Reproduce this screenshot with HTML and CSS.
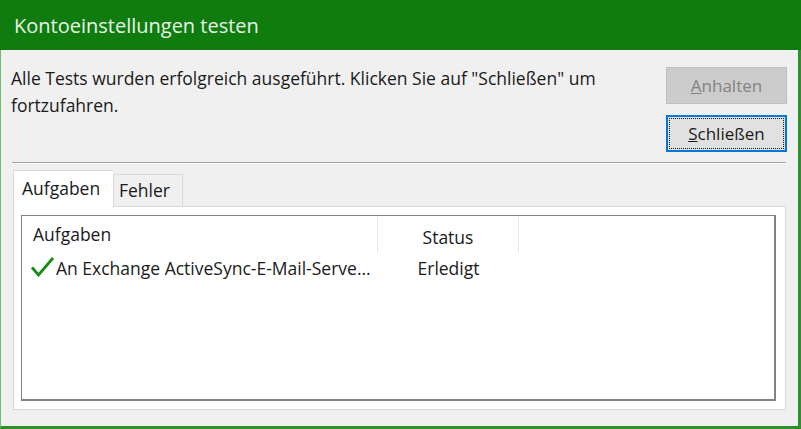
FILE: index.html
```html
<!DOCTYPE html>
<html lang="de">

<head>
    <meta charset="UTF-8">
    <meta name="viewport" content="width=device-width, initial-scale=1.0">
    <title>Kontoeinstellungen testen</title>
    <link rel="stylesheet" href="styles.css">
</head>

<body>

    <div class="window">
        <div class="titlebar">Kontoeinstellungen testen</div>

        <div class="content">
            <div class="top">
                <p class="message">Alle Tests wurden erfolgreich ausgeführt. Klicken Sie auf "Schließen" um fortzufahren.</p>
                <div class="buttons">
                    <button class="btn" disabled><u>A</u>nhalten</button>
                    <button class="btn default"><span class="focus"><u>S</u>chließen</span></button>
                </div>
            </div>

            <div class="separator"></div>

            <div class="tabs">
                <div class="tab active">Aufgaben</div>
                <div class="tab">Fehler</div>
            </div>

            <div class="panel">
                <div class="list">
                    <div class="list-head">
                        <div class="col col-task">Aufgaben</div>
                        <div class="col col-status">Status</div>
                    </div>
                    <div class="list-row">
                        <div class="col col-task">
                            <svg class="check" width="23" height="20" viewBox="0 0 23 20">
                                <path d="M1 10.5 L7.5 18 L22 1" fill="none" stroke="#178a17" stroke-width="2.8" />
                            </svg>
                            An Exchange ActiveSync-E-Mail-Serve...
                        </div>
                        <div class="col col-status">Erledigt</div>
                    </div>
                </div>
            </div>
        </div>
    </div>

</body>

</html>
```

FILE: styles.css
```css
body {
    margin: 0;
    font-family: 'Open Sans', 'Noto Sans', sans-serif;
    font-size: 17.5px;
    color: #1a1a1a;
    background-color: #f0f0f0;
}

.window {
    width: 801px;
    height: 429px;
    box-sizing: border-box;
    border-left: 1px solid #6cc06c;
    border-right: 3px solid #2f8f2f;
    border-bottom: 3px solid #2f8f2f;
    background-color: #f0f0f0;
    display: flex;
    flex-direction: column;
}

.titlebar {
    height: 50px;
    margin: 0 -3px 0 -1px;
    padding-left: 14px;
    background-color: #107c10;
    color: #e6f4e6;
    font-size: 20px;
    line-height: 51px;
}

.content {
    flex: 1;
    padding: 17px 11px 0 10px;
}

.top {
    display: flex;
    justify-content: space-between;
}

.message {
    margin: -2px 0 0 0;
    width: 620px;
    line-height: 27px;
}

.buttons {
    display: flex;
    flex-direction: column;
    gap: 11px;
}

.btn {
    width: 121px;
    height: 37px;
    font-family: inherit;
    font-size: 17px;
    color: #1a1a1a;
    background-color: #e1e1e1;
    border: 1px solid #adadad;
    padding: 0;
}

.btn[disabled] {
    background-color: #cccccc;
    border-color: #bfbfbf;
    color: #838383;
}

.btn.default {
    border: 2px solid #0078d7;
    padding: 1px;
}

.focus {
    display: flex;
    align-items: center;
    justify-content: center;
    height: 100%;
    box-sizing: border-box;
    border: 1px dotted #1a1a1a;
}

.separator {
    margin: 10px 1px 0 1px;
    height: 1px;
    background-color: #a0a0a0;
    border-bottom: 1px solid #ffffff;
}

.tabs {
    display: flex;
    align-items: flex-end;
    margin: 6px 0 0 2px;
    height: 36px;
}

.tab {
    box-sizing: border-box;
    height: 32px;
    padding: 0 5px;
    line-height: 31px;
    background-color: #f0f0f0;
    border: 1px solid #d9d9d9;
    border-bottom: none;
}

.tab.active {
    width: 100px;
    height: 37px;
    line-height: 34px;
    padding: 0 8px;
    background-color: #ffffff;
    border-right: none;
    position: relative;
    z-index: 1;
    margin-bottom: -1px;
}

.tab + .tab {
    width: 70px;
}

.panel {
    margin: 0 1px 0 2px;
    height: 204px;
    box-sizing: border-box;
    background-color: #ffffff;
    border: 1px solid #d9d9d9;
    padding: 8px 9px 8px 7px;
}

.list {
    height: 100%;
    box-sizing: border-box;
    border: 1px solid #828282;
    border-bottom-width: 2px;
    border-right-width: 2px;
}

.list-head,
.list-row {
    display: flex;
}

.list-head {
    height: 36px;
    line-height: 42px;
}

.list-row {
    height: 32px;
    line-height: 33px;
}

.col {
    box-sizing: border-box;
    white-space: nowrap;
}

.col-task {
    width: 356px;
    padding-left: 11px;
    display: flex;
    align-items: center;
}

.col-status {
    width: 141px;
    text-align: center;
}

.list-head .col-task,
.list-head .col-status {
    border-right: 1px solid #e5e5e5;
}

.list-row .col-task {
    padding-left: 9px;
}

.check {
    margin-right: 2px;
    margin-top: -2px;
}
```
